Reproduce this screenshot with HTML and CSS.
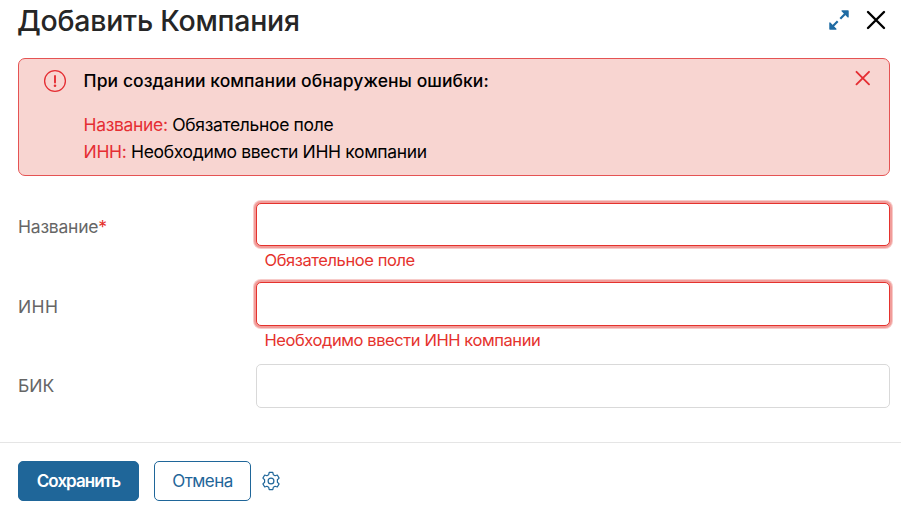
FILE: index.html
```html
<!DOCTYPE html>
<html lang="ru">
<head>
<meta charset="utf-8">
<title>Добавить Компания</title>
<link rel="stylesheet" href="styles.css">
</head>
<body>
<div class="dialog">
  <header class="header">
    <h1 class="title">Добавить Компания</h1>
    <svg class="expand" width="20" height="20" viewBox="0 0 20 20"><path d="M11.3 8.7 16.5 3.5M8.7 11.3 3.5 16.5" fill="none" stroke="#1f6ba3" stroke-width="2.2"/><path d="M13 .9h6.1v6.1zM.9 13v6.1h6.1z" fill="#1f6ba3" stroke="#1f6ba3" stroke-width="1.2" stroke-linejoin="round"/></svg>
    <svg class="close" width="20" height="20" viewBox="0 0 20 20"><path d="M2 2 18 18M18 2 2 18" fill="none" stroke="#000" stroke-width="2.4" stroke-linecap="round"/></svg>
  </header>
  <section class="alert">
    <svg class="alert-icon" width="24" height="24" viewBox="0 0 24 24"><circle cx="12" cy="12" r="10.4" fill="none" stroke="#e52e33" stroke-width="1.3"/><path d="M12 6.9v6.6" stroke="#e52e33" stroke-width="1.9" stroke-linecap="round"/><circle cx="12" cy="16.7" r="1.3" fill="#e52e33"/></svg>
    <div class="alert-body">
      <p class="alert-title">При создании компании обнаружены ошибки:</p>
      <p class="alert-line"><span class="key">Название:</span> Обязательное поле</p>
      <p class="alert-line"><span class="key">ИНН:</span> Необходимо ввести ИНН компании</p>
    </div>
    <svg class="alert-close" width="16" height="16" viewBox="0 0 16 16"><path d="M1.5 1.8 14 14.3M14 1.8 1.5 14.3" fill="none" stroke="#e52e33" stroke-width="1.9" stroke-linecap="round"/></svg>
  </section>
  <main class="form">
    <div class="row row-name">
      <label class="label" for="name">Название<span class="star">*</span></label>
      <div class="field"><input class="input invalid" id="name"><p class="error">Обязательное поле</p></div>
    </div>
    <div class="row row-inn">
      <label class="label" for="inn">ИНН</label>
      <div class="field"><input class="input invalid" id="inn"><p class="error">Необходимо ввести ИНН компании</p></div>
    </div>
    <div class="row row-bik">
      <label class="label" for="bik">БИК</label>
      <div class="field"><input class="input" id="bik"></div>
    </div>
  </main>
  <footer class="footer">
    <button class="button primary">Сохранить</button>
    <button class="button secondary">Отмена</button>
    <svg class="gear" width="20" height="20" viewBox="0 0 20 20"><path d="M8.2 1.4h3.6l.5 2.3 1.8 1 2.2-.7 1.8 3.1-1.7 1.6v2.6l1.7 1.6-1.8 3.1-2.2-.7-1.8 1-.5 2.3H8.2l-.5-2.3-1.8-1-2.2.7-1.8-3.1 1.7-1.6V8.7L1.9 7.1 3.7 4l2.2.7 1.8-1z" fill="none" stroke="#1f6699" stroke-width="1.2" stroke-linejoin="round"/><circle cx="10" cy="10" r="2.9" fill="none" stroke="#1f6699" stroke-width="1.2"/></svg>
  </footer>
</div>
</body>
</html>
```

FILE: styles.css
```css
* { box-sizing: border-box; }
body { margin: 0; background: #fff; font-family: Inter, "Liberation Sans", sans-serif; font-size: 17.5px; color: #000; }
p, h1 { margin: 0; }
svg { display: block; flex: none; }
.dialog { height: 508px; overflow: hidden; display: flex; flex-direction: column; }
.header { height: 58px; flex: none; display: flex; align-items: flex-start; padding: 0 15px 0 17px; }
.title { flex: 1; font-size: 28.5px; line-height: 42px; font-weight: 550; letter-spacing: -0.25px; color: #262626; white-space: nowrap; }
.expand { margin: 10px 17px 0 0; }
.close { margin-top: 10px; }
.alert { height: 118px; flex: none; margin: 0 11px 0 18px; display: flex; align-items: flex-start; border: 1px solid #e55353; border-radius: 7px; background: #f8d5d1; padding: 0 18px 0 24px; }
.alert-icon { margin-top: 10px; }
.alert-body { flex: 1; padding: 8px 0 0 16.6px; line-height: 27px; white-space: nowrap; }
.alert-title { font-weight: 550; margin-bottom: 17px; letter-spacing: 0.06px; }
.alert-line { letter-spacing: -0.34px; }
.key { color: #e52e33; }
.alert-close { margin-top: 11px; }
.form { height: 266px; flex: none; padding: 27px 11px 0 18px; }
.row { display: grid; grid-template-columns: 238px 1fr; height: 82px; }
.row-name { height: 79px; }
.label { line-height: 44px; padding-top: 2px; color: #666; letter-spacing: -0.22px; }
.row-inn .label { padding-top: 3px; letter-spacing: 0.4px; }
.row-bik .label { padding-top: 0; letter-spacing: 0; }
.star { color: #e5322d; }
.input { display: block; width: 100%; height: 44px; border: 1px solid #d9d9d9; border-radius: 5px; background: #fff; outline: none; }
.row-name .input { height: 43px; }
.invalid { border-color: #e5322d; box-shadow: 0 0 0 2px #f19c99, 0 0 0 3px #f7cbc9; }
.error { padding-left: 8.5px; color: #e5322d; font-size: 16.5px; line-height: 28px; letter-spacing: -0.42px; white-space: nowrap; }
.footer { height: 66px; flex: none; display: flex; align-items: flex-start; border-top: 1px solid #e5e5e5; padding: 18px 18px 0; }
.button { height: 40px; padding: 0; border: 1px solid #1f6699; border-radius: 5px; font: 400 17px Inter, "Liberation Sans", sans-serif; letter-spacing: -0.55px; }
.primary { width: 121px; margin-right: 15px; background: #1f6699; color: #fff; font-weight: 600; letter-spacing: -0.95px; }
.secondary { width: 97px; margin-right: 10px; background: #fff; color: #1f6699; }
.gear { margin-top: 10px; }
```
